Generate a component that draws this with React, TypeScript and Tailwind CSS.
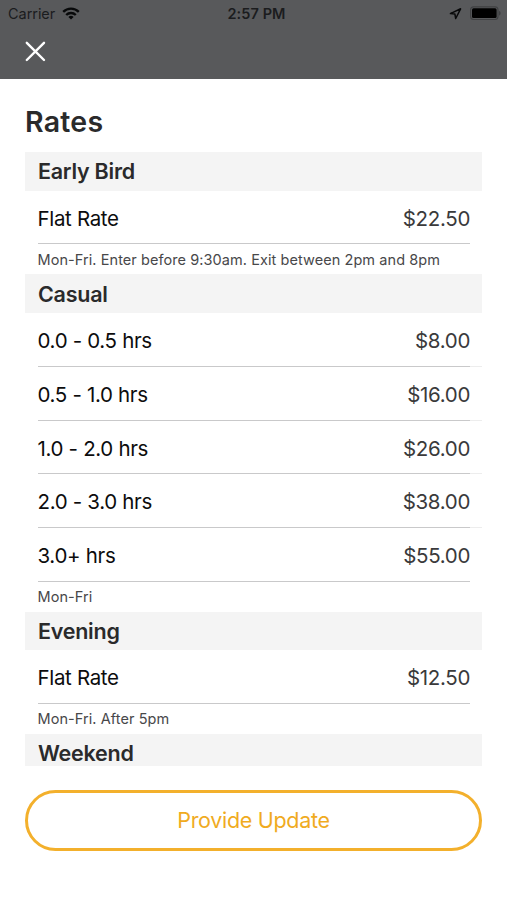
interface RateRow {
  label: string;
  price: string;
}

interface RateSection {
  title: string;
  rows: RateRow[];
  note?: string;
}

const sections: RateSection[] = [
  {
    title: "Early Bird",
    rows: [{ label: "Flat Rate", price: "$22.50" }],
    note: "Mon-Fri. Enter before 9:30am. Exit between 2pm and 8pm",
  },
  {
    title: "Casual",
    rows: [
      { label: "0.0 - 0.5 hrs", price: "$8.00" },
      { label: "0.5 - 1.0 hrs", price: "$16.00" },
      { label: "1.0 - 2.0 hrs", price: "$26.00" },
      { label: "2.0 - 3.0 hrs", price: "$38.00" },
      { label: "3.0+ hrs", price: "$55.00" },
    ],
    note: "Mon-Fri",
  },
  {
    title: "Evening",
    rows: [{ label: "Flat Rate", price: "$12.50" }],
    note: "Mon-Fri. After 5pm",
  },
  { title: "Weekend", rows: [] },
];

function StatusBar() {
  return (
    <div className="grid h-[27px] grid-cols-3 items-center pl-2 pr-[6px] text-[#1b1c1e]">
      <div className="flex items-center gap-[7px]">
        <span className="text-[14.5px] tracking-[-0.05px]">Carrier</span>
        <svg width="18" height="13" viewBox="0 0 18 13" fill="none" stroke="#08090a" strokeWidth="2.3">
          <path d="M1.2 4.9a11 11 0 0 1 15.6 0" />
          <path d="M4.2 8a6.8 6.8 0 0 1 9.6 0" />
          <path d="M9 12.6 6.4 10a3.7 3.7 0 0 1 5.2 0z" fill="#08090a" stroke="none" />
        </svg>
      </div>
      <span className="pl-1 text-center text-[14.5px] font-semibold tracking-[0.1px]">2:57 PM</span>
      <div className="flex items-center justify-end gap-[8px]">
        <svg width="13" height="13" viewBox="0 0 13 13" fill="none" stroke="#08090a" strokeWidth="1.5" strokeLinejoin="round">
          <path d="M11.6 1.8 1.4 6.6l4.5.5.8 4.4z" />
        </svg>
        <svg width="31" height="15" viewBox="0 0 31 15">
          <rect x="0.6" y="0.9" width="27.4" height="12.6" rx="3" fill="none" stroke="#3f4042" strokeWidth="1.1" />
          <rect x="2" y="2.3" width="24.6" height="9.8" rx="1.5" fill="#000" />
          <path d="M29 5v4.6c1-.3 1.6-1.2 1.6-2.3s-.6-2-1.6-2.3z" fill="#3f4042" />
        </svg>
      </div>
    </div>
  );
}

function Section({ title, rows, note }: RateSection) {
  return (
    <section>
      <h2 className="flex h-[38.7px] items-center bg-[#f4f4f4] px-[13px] text-[21.5px] font-semibold tracking-[-0.25px] text-[#2a2a2b]">
        {title}
      </h2>
      {rows.map((row, idx) => (
        <div key={row.label} className="flex h-[53.8px]">
          <div className="ml-[12.5px] flex flex-1 items-center justify-between border-b border-[#c9c9ca] pt-1 text-[20.5px]">
            <span className="tracking-[-0.33px] text-[#0c0c0d]">{row.label}</span>
            <span className="tracking-[-0.33px] text-[#3a3a3b]">{row.price}</span>
          </div>
          {/* separator fades into the right inset between rows */}
          <div className={idx < rows.length - 1 ? "w-3 border-b border-[#ededed]" : "w-3"} />
        </div>
      ))}
      {note && (
        <p className="flex h-[29.8px] items-center px-[12.5px] text-[14.5px] tracking-[0.07px] text-[#48484a]">
          {note}
        </p>
      )}
    </section>
  );
}

export default function App() {
  return (
    <div className="flex h-[900px] w-[507px] flex-col overflow-hidden bg-white font-['Inter',sans-serif]">
      <header className="h-[79px] shrink-0 bg-[#58595b]">
        <StatusBar />
        <button type="button" aria-label="Close" className="ml-[25px] mt-[14px] block">
          <svg width="21" height="21" viewBox="0 0 21 21" fill="none" stroke="#fff" strokeWidth="2.4" strokeLinecap="round">
            <path d="M1.8 1.8 19 19M19 1.8 1.8 19" />
          </svg>
        </button>
      </header>

      <main className="flex flex-1 flex-col px-[25px]">
        <h1 className="flex h-[73px] items-center pt-[13px] text-[28.5px] font-semibold tracking-[0.25px] text-[#2a2a2b]">
          Rates
        </h1>
        <div className="h-[614px] shrink-0 overflow-hidden">
          {sections.map((section) => (
            <Section key={section.title} {...section} />
          ))}
        </div>
        <button
          type="button"
          className="mt-6 h-[61px] shrink-0 rounded-full border-[3px] border-[#f3b02c] text-[21.5px] tracking-[-0.3px] text-[#f0ab1f]"
        >
          Provide Update
        </button>
      </main>
    </div>
  );
}
